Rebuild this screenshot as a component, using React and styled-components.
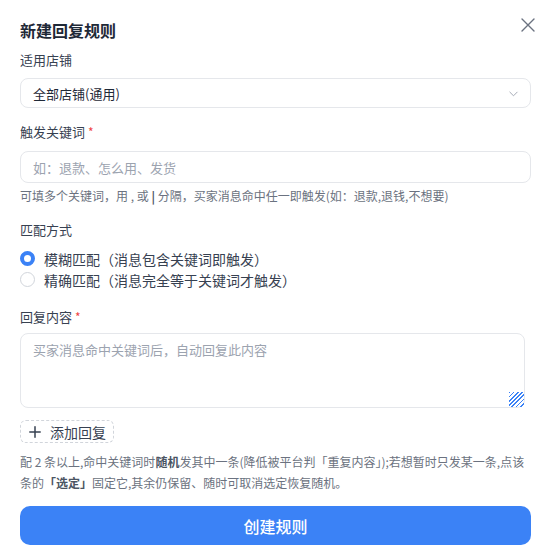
import React from "react";
import styled, { createGlobalStyle } from "styled-components";

const Global = createGlobalStyle`
  html, body { margin: 0; padding: 0; background: #fff; }
  body {
    font-family: "Noto Sans CJK SC", "Noto Sans", sans-serif;
    color: #374151;
  }
  * { box-sizing: border-box; }
`;

const Panel = styled.div`
  width: 546px;
  height: 553px;
  padding: 18px 11px 0 20px;
  background: #fff;
  display: flex;
  flex-direction: column;
`;

const Header = styled.div`
  display: flex;
  align-items: flex-start;
  justify-content: space-between;
  height: 24px;
  margin-bottom: 8px;
`;

const Title = styled.h2`
  margin: 0;
  font-size: 16px;
  line-height: 24px;
  font-weight: 700;
  color: #1f2937;
`;

const CloseBtn = styled.button`
  border: none;
  background: none;
  padding: 0;
  margin-top: -1px;
  width: 15px;
  height: 15px;
  display: flex;
  align-items: center;
  justify-content: center;
  color: #6b7280;
  cursor: pointer;
`;

const Field = styled.div`
  display: flex;
  flex-direction: column;
  width: 511px;
  margin-bottom: ${(p) => p.$mb || 0}px;
`;

const Label = styled.div`
  font-size: 13px;
  line-height: 20px;
  color: #374151;
  margin-bottom: ${(p) => p.$mb ?? 8}px;
`;

const Req = styled.span`
  color: #ef4444;
  margin-left: 3px;
  font-size: 12px;
`;

const SelectBox = styled.div`
  height: 30px;
  border: 1px solid #e5e7eb;
  border-radius: 8px;
  display: flex;
  align-items: center;
  justify-content: space-between;
  padding: 0 11px 0 12px;
  font-size: 13px;
  color: #1f2937;
`;

const TextInput = styled.input`
  height: 32px;
  border: 1px solid #e5e7eb;
  border-radius: 8px;
  padding: 0 12px;
  font-family: inherit;
  font-size: 13px;
  color: #1f2937;
  outline: none;
  &::placeholder { color: #9ca3af; }
`;

const Hint = styled.div`
  margin-top: 4px;
  font-size: 12px;
  line-height: 18px;
  color: #6b7280;
  b { color: #4b5563; font-weight: 700; }
`;

const RadioRow = styled.label`
  display: flex;
  align-items: center;
  gap: 9px;
  height: 21px;
  font-size: 14px;
  color: #374151;
`;

const RadioDot = styled.span`
  width: 15px;
  height: 15px;
  border-radius: 50%;
  flex: none;
  border: ${(p) => (p.$on ? "4.5px solid #3b82f6" : "1px solid #d1d5db")};
  background: #fff;
`;

const TextArea = styled.textarea`
  width: 505px;
  height: 75px;
  border: 1px solid #e5e7eb;
  border-radius: 8px;
  padding: 6px 12px;
  font-family: inherit;
  font-size: 13px;
  line-height: 20px;
  color: #1f2937;
  outline: none;
  resize: vertical;
  display: block;
  &::placeholder { color: #9ca3af; }
  &::-webkit-resizer {
    background: repeating-linear-gradient(
      135deg,
      #3b82f6 0px,
      #3b82f6 1.2px,
      transparent 1.2px,
      transparent 3px
    );
  }
`;

const AddBtn = styled.button`
  align-self: flex-start;
  height: 23px;
  margin-top: 12px;
  padding: 0 7px 0 8px;
  border: 1px dashed #d1d5db;
  border-radius: 6px;
  background: #fff;
  display: flex;
  align-items: center;
  gap: 9px;
  font-family: inherit;
  font-size: 14px;
  color: #374151;
`;

const Note = styled.p`
  margin: 8px 0 0;
  width: 511px;
  font-size: 12px;
  line-height: 21px;
  color: #6b7280;
  b { color: #4b5563; font-weight: 700; }
`;

const Submit = styled.button`
  margin-top: 13px;
  width: 511px;
  height: 39px;
  border: none;
  border-radius: 10px;
  background: #3b82f6;
  color: #fff;
  font-family: inherit;
  font-size: 16px;
  font-weight: 500;
  cursor: pointer;
`;

const XIcon = () => (
  <svg width="14" height="14" viewBox="0 0 14 14" fill="none" stroke="currentColor" strokeWidth="1.4" strokeLinecap="round">
    <path d="M1 1L13 13M13 1L1 13" />
  </svg>
);

const Chevron = () => (
  <svg width="11" height="11" viewBox="0 0 12 12" fill="none" stroke="#9ca3af" strokeWidth="1" strokeLinecap="round" strokeLinejoin="round">
    <path d="M2 4.5L6 8.5L10 4.5" />
  </svg>
);

const Plus = () => (
  <svg width="12" height="12" viewBox="0 0 12 12" fill="none" stroke="#374151" strokeWidth="1.5" strokeLinecap="round">
    <path d="M6 0.8V11.2M0.8 6H11.2" />
  </svg>
);

export default function App() {
  return (
    <>
      <Global />
      <Panel>
        <Header>
          <Title>新建回复规则</Title>
          <CloseBtn aria-label="关闭"><XIcon /></CloseBtn>
        </Header>

        <Field $mb={14}>
          <Label>适用店铺</Label>
          <SelectBox>
            <span>全部店铺(通用)</span>
            <Chevron />
          </SelectBox>
        </Field>

        <Field $mb={15}>
          <Label $mb={9}>触发关键词<Req>*</Req></Label>
          <TextInput placeholder="如：退款、怎么用、发货" />
          <Hint>可填多个关键词，用 , 或 <b>|</b> 分隔，买家消息命中任一即触发(如：退款,退钱,不想要)</Hint>
        </Field>

        <Field $mb={17}>
          <Label>匹配方式</Label>
          <RadioRow><RadioDot $on />模糊匹配（消息包含关键词即触发）</RadioRow>
          <RadioRow><RadioDot />精确匹配（消息完全等于关键词才触发）</RadioRow>
        </Field>

        <Field>
          <Label $mb={6}>回复内容<Req>*</Req></Label>
          <TextArea placeholder="买家消息命中关键词后，自动回复此内容" />
          <AddBtn><Plus />添加回复</AddBtn>
        </Field>

        <Note>
          配 2 条以上,命中关键词时<b>随机</b>发其中一条(降低被平台判「重复内容」);若想暂时只发某一条,点该条的<b>「选定」</b>固定它,其余仍保留、随时可取消选定恢复随机。
        </Note>

        <Submit>创建规则</Submit>
      </Panel>
    </>
  );
}
